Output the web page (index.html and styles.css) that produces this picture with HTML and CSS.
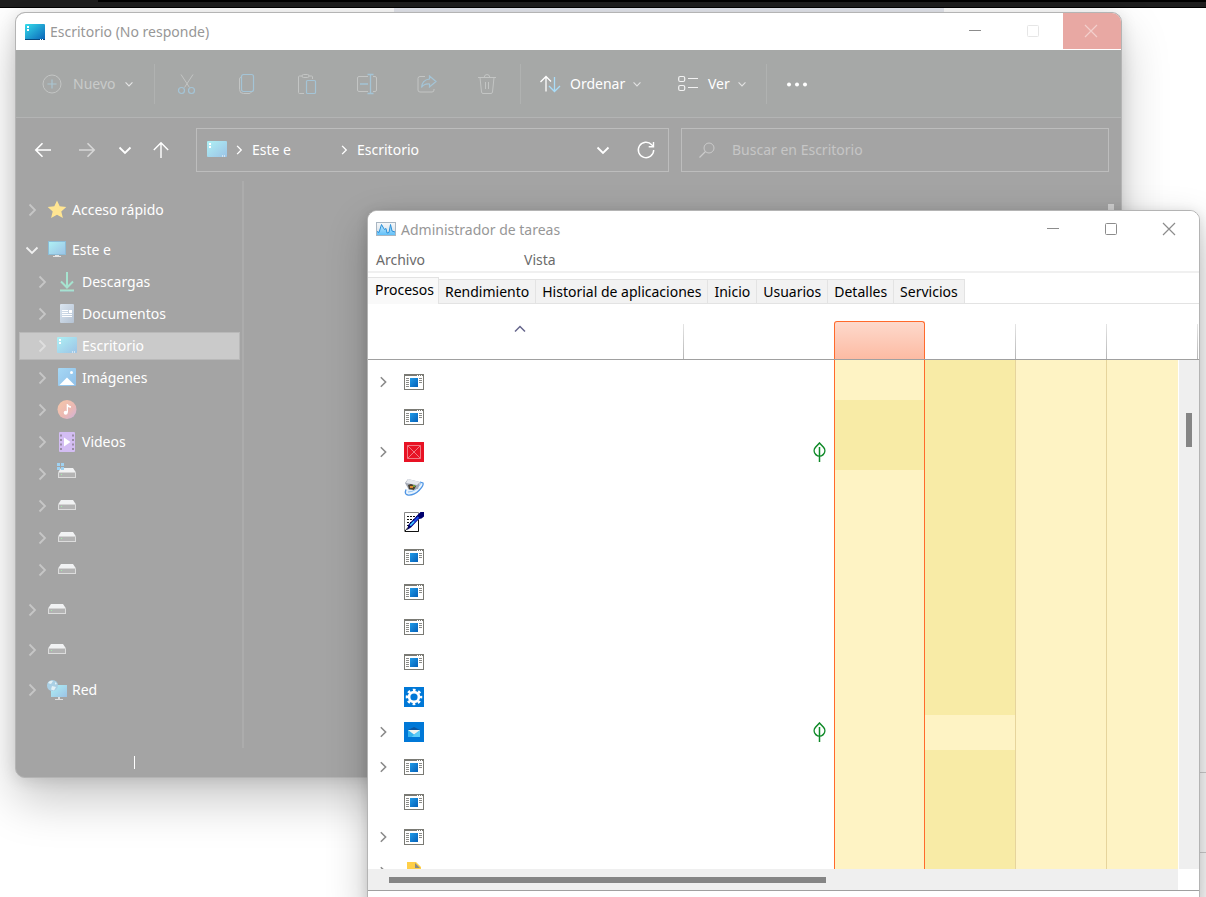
FILE: index.html
```html
<!DOCTYPE html>
<html lang="es">
<head>
<meta charset="utf-8">
<title>Escritorio</title>
<link rel="stylesheet" href="styles.css">
</head>
<body>
<svg class="defs" aria-hidden="true">
  <defs>
    <linearGradient id="g-desk" x1="0" y1="0" x2="1" y2="1"><stop offset="0" stop-color="#35dcea"/><stop offset="1" stop-color="#0a62b8"/></linearGradient>
    <linearGradient id="g-desk-soft" x1="0" y1="0" x2="1" y2="1"><stop offset="0" stop-color="#aef0f4"/><stop offset="1" stop-color="#9cc3e6"/></linearGradient>
    <linearGradient id="g-down" x1="0" y1="0" x2="0" y2="1"><stop offset="0" stop-color="#aee8cb"/><stop offset="1" stop-color="#9fdcd8"/></linearGradient>
    <linearGradient id="g-doc" x1="0" y1="0" x2="1" y2="1"><stop offset="0" stop-color="#dbe6f1"/><stop offset="1" stop-color="#b4c2d3"/></linearGradient>
    <linearGradient id="g-img" x1="0" y1="0" x2="1" y2="1"><stop offset="0" stop-color="#a6d8f5"/><stop offset="1" stop-color="#8fbfe8"/></linearGradient>
    <linearGradient id="g-music" x1="0" y1="0" x2="1" y2="1"><stop offset="0" stop-color="#f6c8a8"/><stop offset=".6" stop-color="#eab8b4"/><stop offset="1" stop-color="#cdb2dc"/></linearGradient>
    <linearGradient id="g-app" x1="0" y1="0" x2="1" y2="1"><stop offset="0" stop-color="#1f9be8"/><stop offset="1" stop-color="#0560b8"/></linearGradient>
    <linearGradient id="g-tm" x1="0" y1="0" x2="0" y2="1"><stop offset="0" stop-color="#f6f8fa"/><stop offset="1" stop-color="#cfdbe4"/></linearGradient>
    <linearGradient id="g-tmf" x1="0" y1="0" x2="0" y2="1"><stop offset="0" stop-color="#c4ebff"/><stop offset="1" stop-color="#62c0f8"/></linearGradient>
  </defs>
  <symbol id="i-right" viewBox="0 0 16 16"><path d="M5.500 2.500 11 8l-5.500 5.500" fill="none" stroke="currentColor" stroke-width="1.800"/></symbol>
  <symbol id="i-down" viewBox="0 0 16 16"><path d="M2.500 5.500 8 11l5.500-5.500" fill="none" stroke="currentColor" stroke-width="1.800"/></symbol>
  <symbol id="i-min" viewBox="0 0 16 16"><path d="M2 7.500h12" stroke="currentColor"/></symbol>
  <symbol id="i-max" viewBox="0 0 16 16"><rect x="2.500" y="2.500" width="11" height="11" rx="1" fill="none" stroke="currentColor"/></symbol>
  <symbol id="i-close" viewBox="0 0 16 16"><path d="m2 2 12 12M14 2 2 14" stroke="currentColor" stroke-width="1.200"/></symbol>
  <symbol id="i-screen" viewBox="0 0 20 20"><rect y="1" width="20" height="16" rx="1" fill="url(#g-desk-soft)"/><path d="M2 3h2v2H2zM2 6h2v2H2zM15 15.500h1v1h-1zM17 15.500h1v1h-1z" fill="#fff"/></symbol>
  <symbol id="i-pc" viewBox="0 0 20 20"><path d="M1 1h18v14H1z" fill="#8cbcd6"/><path d="M2 2h16v12H2z" fill="url(#g-desk-soft)"/><path d="M8 15h4v1h2v1H6v-1h2z" fill="#e4e4e4"/></symbol>
  <symbol id="i-drive" viewBox="0 0 20 20"><path d="M4 4h12l3 4.500H1z" fill="#f1f2f3"/><path d="M1 8.500h18V14H1z" fill="#dcdcdc"/><path d="M2 9h16v4H2z" fill="#b3b3b3"/><path d="M4 10h1v1H4z" fill="#a0efa8"/></symbol>
  <symbol id="i-app" viewBox="0 0 20 20"><rect x=".5" y="2.500" width="19" height="15" fill="#fff" stroke="#7a7a74"/><path d="M0 2h20v2H0z" fill="#7a7a74"/><path d="M13 3.500h1M15 3.500h1M17 3.500h1" stroke="#fff"/><path d="M2 6.500h3M2 8.500h3M2 10.500h3M2 12.500h3M2 14.500h3M15 6.500h3M15 8.500h3M15 10.500h3" stroke="#8c8c88"/><path d="M6 6h8v9H6z" fill="url(#g-app)"/></symbol>
  <symbol id="i-leaf" viewBox="0 0 14 20"><path d="M6.500 1 10.500 5.300a5.300 5.300 0 1 1-8 0z" fill="none" stroke="#0f8a28" stroke-width="1.500"/><path d="M6.500 5v15" stroke="#0f8a28" stroke-width="1.500"/></symbol>
</svg>

<div class="desktop">
  <div class="backdrop"><div class="strip"></div><div class="behind"></div></div>

  <section class="window explorer" aria-label="Escritorio (No responde)">
    <header class="titlebar">
      <svg class="ic20" viewBox="0 0 20 20"><rect y="2" width="20" height="16" rx="1" fill="url(#g-desk)"/><path d="M0 17h20v.5q0 .5-.5.500H.5Q0 18 0 17.500z" fill="#084a80"/><path d="M2 4h2v2H2zM2 7h2v2H2zM15 17h1v1h-1zM17 17h1v1h-1z" fill="#fff"/></svg>
      <h1>Escritorio (No responde)</h1>
      <div class="controls">
        <button aria-label="Minimizar"><svg class="ic16"><use href="#i-min"/></svg></button>
        <button class="faint" aria-label="Maximizar"><svg class="ic16"><use href="#i-max"/></svg></button>
        <button class="danger" aria-label="Cerrar"><svg class="ic16"><use href="#i-close"/></svg></button>
      </div>
    </header>

    <div class="toolbar">
      <button class="tool new"><svg class="ic20" viewBox="0 0 20 20" fill="none"><circle cx="10" cy="10" r="9" stroke="#c3c5c4"/><path d="M10 5.500v9M5.500 10h9" stroke="#aac5d2" stroke-width="1.200"/></svg><span>Nuevo</span><svg class="ic10"><use href="#i-down"/></svg></button>
      <div class="icon-group">
        <button class="tool" aria-label="Cortar"><svg class="ic20" viewBox="0 0 20 20" fill="none"><path d="m4 .5 8.500 13M16 .5l-8.500 13" stroke="#c3c5c4"/><circle cx="4.500" cy="16.500" r="3" stroke="#a4c4d6" stroke-width="1.200"/><circle cx="14.500" cy="16.500" r="3" stroke="#a4c4d6" stroke-width="1.200"/></svg></button>
        <button class="tool" aria-label="Copiar"><svg class="ic20" viewBox="0 0 20 20" fill="none"><path d="M4 3Q2.500 3.500 2.500 5v10.500q0 4 4 4H12q1.500 0 2.500-1.500" stroke="#c3c5c4"/><rect x="4.500" y=".5" width="12" height="17" rx="2" stroke="#a4c4d6" stroke-width="1.200"/></svg></button>
        <button class="tool" aria-label="Pegar"><svg class="ic20" viewBox="0 0 20 20" fill="none"><path d="M5 2H2.500q-1 0-1 1v15.500q0 1 1 1H7M12 2h2.500q1 0 1 1v2" stroke="#c3c5c4"/><rect x="5" y=".5" width="7" height="3" rx="1.500" stroke="#c3c5c4"/><rect x="9.500" y="6.500" width="9" height="13" rx="1" stroke="#a4c4d6" stroke-width="1.200"/></svg></button>
        <button class="tool" aria-label="Cambiar nombre"><svg class="ic20" viewBox="0 0 20 20" fill="none"><path d="M11 2.500H2q-1.500 0-1.500 1.500v12q0 1.500 1.500 1.500h9M16 2.500h2q1.500 0 1.500 1.500v12q0 1.500-1.500 1.500h-2" stroke="#c3c5c4"/><path d="M10.500.5h6M13.500.5v19M10.500 19.500h6M3 10h8" stroke="#a4c4d6" stroke-width="1.300"/></svg></button>
        <button class="tool" aria-label="Compartir"><svg class="ic20" viewBox="0 0 20 20" fill="none"><path d="M8 2.500H3q-2 0-2 2V16q0 2 2 2h12q2 0 2-2v-1" stroke="#c3c5c4"/><path d="M12.500 2 19 7.500 12.500 13V10Q7 9.500 4.500 13.500 5 6 12.500 5z" stroke="#a4c4d6" stroke-width="1.200"/></svg></button>
        <button class="tool" aria-label="Eliminar"><svg class="ic20" viewBox="0 0 20 20" fill="none" stroke="#c3c5c4"><path d="M1 3.500h18M7 3.500Q7.500.5 10 .5t3 3M3 3.500l1.500 14.500q.2 1.500 1.500 1.500h8q1.300 0 1.500-1.500L17 3.500M8.500 8v7M11.500 8v7"/></svg></button>
      </div>
      <button class="tool labelled sort"><svg class="ic20" viewBox="0 0 20 20" fill="none" stroke-width="1.300"><path d="M6 17.500V3M.5 8 6 2.500 11 7.500" stroke="#fff"/><path d="M14.500 3v14.500M9 12l5.500 5.500L20 12" stroke="#a9dcf8"/></svg><span>Ordenar</span><svg class="ic10"><use href="#i-down"/></svg></button>
      <button class="tool labelled view"><svg class="ic20" viewBox="0 0 20 20" fill="none" stroke="#f2f2f2" stroke-width="1.200"><rect x=".7" y="2.500" width="6" height="5" rx="1.500"/><rect x=".7" y="11.500" width="6" height="5" rx="1.500"/><path d="M10 4.500h10M10 13.500h10"/></svg><span>Ver</span><svg class="ic10"><use href="#i-down"/></svg></button>
      <button class="tool" aria-label="Ver más"><svg class="ic20" viewBox="0 0 20 20" fill="#fff"><circle cx="2" cy="10.500" r="2"/><circle cx="10" cy="10.500" r="2"/><circle cx="18" cy="10.500" r="2"/></svg></button>
    </div>

    <div class="navrow">
      <div class="navbuttons">
        <button aria-label="Atrás"><svg class="ic16" viewBox="0 0 16 16"><path d="M16 8H1M7.500 1.300.8 8l6.700 6.700" fill="none" stroke="#fff" stroke-width="1.600"/></svg></button>
        <button aria-label="Adelante"><svg class="ic16" viewBox="0 0 16 16"><path d="M0 8h15M8.500 1.300 15.200 8l-6.700 6.700" fill="none" stroke="#d6d6d6" stroke-width="1.600"/></svg></button>
        <button class="narrow" aria-label="Ubicaciones recientes"><svg class="ic16"><use href="#i-down"/></svg></button>
        <button class="up" aria-label="Subir"><svg class="ic16" viewBox="0 0 16 16"><path d="M8 16V1M.8 8 8 .8 15.200 8" fill="none" stroke="#fff" stroke-width="1.400"/></svg></button>
      </div>
      <div class="address">
        <svg class="ic20"><use href="#i-screen"/></svg>
        <svg class="ic12"><use href="#i-right"/></svg>
        <a class="crumb first" href="#equipo">Este e</a>
        <svg class="ic12"><use href="#i-right"/></svg>
        <a class="crumb" href="#escritorio">Escritorio</a>
        <span class="grow"></span>
        <button aria-label="Ubicaciones anteriores"><svg class="ic16"><use href="#i-down"/></svg></button>
        <button aria-label="Actualizar"><svg class="ic18" viewBox="0 0 18 18"><path d="M16.700 9a7.700 7.700 0 1 1-2-5.200L16.500 5.500" fill="none" stroke="#fff" stroke-width="1.400"/><path d="M16.500 1v4.800h-4.800" fill="none" stroke="#fff" stroke-width="1.400"/></svg></button>
      </div>
      <label class="search">
        <svg class="ic16" viewBox="0 0 16 16"><circle cx="10" cy="6" r="5" fill="none" stroke="#cbcbcb"/><path d="M6.500 9.500.5 15.500" stroke="#cbcbcb" stroke-width="1.200"/></svg>
        <input type="search" placeholder="Buscar en Escritorio" aria-label="Buscar en Escritorio">
      </label>
    </div>

    <div class="content">
      <nav class="tree" aria-label="Panel de navegación">
        <a class="node top" href="#rapido"><svg class="ic16 chev"><use href="#i-right"/></svg><svg class="ic20" viewBox="0 0 20 20"><path d="m10 .5 2.700 5.800 6.600.6-5 4.500 1.600 6.700L10 14.800l-5.900 3.300 1.600-6.700-5-4.500 6.600-.6z" fill="#ffe592"/></svg><span>Acceso rápido</span></a>
        <a class="node top open" href="#equipo"><svg class="ic16 chev"><use href="#i-down"/></svg><svg class="ic20"><use href="#i-pc"/></svg><span>Este e</span></a>
        <a class="node" href="#descargas"><svg class="ic16 chev"><use href="#i-right"/></svg><svg class="ic20" viewBox="0 0 20 20"><path d="M10 0v15M4 9.500l6 6 6-6" fill="none" stroke="#a6e3cf" stroke-width="2"/><path d="M3 17.500h14v2H3z" fill="url(#g-down)"/></svg><span>Descargas</span></a>
        <a class="node" href="#documentos"><svg class="ic16 chev"><use href="#i-right"/></svg><svg class="ic20" viewBox="0 0 20 20"><rect x="3" width="14" height="19" rx="1" fill="url(#g-doc)"/><path d="M5 6.500h6M5 8.500h6M5 10.500h10M5 12.500h10" stroke="#fff"/><path d="M12 6h3v3h-3z" fill="#fff"/></svg><span>Documentos</span></a>
        <a class="node current" href="#escritorio" aria-current="page"><svg class="ic16 chev"><use href="#i-right"/></svg><svg class="ic20"><use href="#i-screen"/></svg><span>Escritorio</span></a>
        <a class="node" href="#imagenes"><svg class="ic16 chev"><use href="#i-right"/></svg><svg class="ic20" viewBox="0 0 20 20"><rect x="1" width="18" height="18" rx="1" fill="url(#g-img)"/><circle cx="14.500" cy="4.500" r="1.500" fill="#fff"/><path d="M2.500 17 10 9.500l7.500 7.500z" fill="#fff"/></svg><span>Imágenes</span></a>
        <a class="node" href="#musica" aria-label="Música"><svg class="ic16 chev"><use href="#i-right"/></svg><svg class="ic20" viewBox="0 0 20 20"><circle cx="10" cy="9.500" r="9.500" fill="url(#g-music)"/><circle cx="8.700" cy="12.700" r="2" fill="#fff"/><path d="M9.700 12.500V4h1q.8 2 3.300 2.200v1.500q-2 0-3-.8v5.600z" fill="#fff"/></svg></a>
        <a class="node" href="#videos"><svg class="ic16 chev"><use href="#i-right"/></svg><svg class="ic20" viewBox="0 0 20 20"><rect x="2" width="16" height="20" rx="1" fill="#d3bdf3"/><path d="M4 2.500v16M16 2.500v16" stroke="#9a8ca8" stroke-width="2" stroke-dasharray="2 2.500"/><path d="M7 5.500 13.500 10 7 14.500z" fill="#fff"/></svg><span>Videos</span></a>
        <a class="node" href="#c" aria-label="Disco del sistema"><svg class="ic16 chev"><use href="#i-right"/></svg><svg class="ic20" viewBox="0 0 20 20"><use href="#i-drive" width="20" height="20"/><path d="M0-1h3v3H0zM4-1h3v3H4zM0 3h3v3H0zM4 3h3v3H4z" fill="#9fd2f2"/></svg></a>
        <a class="node" href="#d" aria-label="Disco"><svg class="ic16 chev"><use href="#i-right"/></svg><svg class="ic20"><use href="#i-drive"/></svg></a>
        <a class="node" href="#e" aria-label="Disco"><svg class="ic16 chev"><use href="#i-right"/></svg><svg class="ic20"><use href="#i-drive"/></svg></a>
        <a class="node" href="#f" aria-label="Disco"><svg class="ic16 chev"><use href="#i-right"/></svg><svg class="ic20"><use href="#i-drive"/></svg></a>
        <a class="node top" href="#g" aria-label="Disco"><svg class="ic16 chev"><use href="#i-right"/></svg><svg class="ic20"><use href="#i-drive"/></svg></a>
        <a class="node top" href="#h" aria-label="Disco"><svg class="ic16 chev"><use href="#i-right"/></svg><svg class="ic20"><use href="#i-drive"/></svg></a>
        <a class="node top" href="#red"><svg class="ic16 chev"><use href="#i-right"/></svg><svg class="ic20" viewBox="0 0 20 20"><path d="M4 5h16v12H4z" fill="url(#g-desk-soft)"/><path d="M11 17h2v2h3v1H8v-1h3z" fill="#dedede"/><circle cx="5.500" cy="5.500" r="5.500" fill="#a9cfe4"/><path d="M1 3q2-3 5-2L4 4zM5 6l4 1-2 3.500-3-1zM8 2l2 2-2 .5z" fill="#e3f1f6"/></svg><span>Red</span></a>
      </nav>
      <main class="files"><div class="thumb"></div></main>
    </div>
    <footer class="status"><span class="caret"></span></footer>
  </section>

  <section class="window manager" aria-label="Administrador de tareas">
    <header class="titlebar">
      <svg class="ic20" viewBox="0 0 20 20"><rect x=".5" y="2.500" width="19" height="13" fill="url(#g-tm)" stroke="#a9b6c2"/><path d="M1 11.500 3 12 5.500 4.500 7.500 8l1 1.500 1.500-1L11 13l2-.5 1.500-8 1.500 6.500 3 1V15H1z" fill="url(#g-tmf)"/><path d="M1 11.500 3 12.500 5.500 4.500 7.500 8l1 1.500 1.500-1L11 13l2-.5 1.500-8 1.500 6.500 3 1" fill="none" stroke="#2a8fd8"/></svg>
      <h2>Administrador de tareas</h2>
      <div class="controls">
        <button aria-label="Minimizar"><svg class="ic16"><use href="#i-min"/></svg></button>
        <button aria-label="Maximizar"><svg class="ic16"><use href="#i-max"/></svg></button>
        <button aria-label="Cerrar"><svg class="ic16"><use href="#i-close"/></svg></button>
      </div>
    </header>
    <div class="menubar"><button>Archivo</button><button>Vista</button></div>
    <div class="tabs" role="tablist">
      <button role="tab" aria-selected="true">Procesos</button>
      <button role="tab">Rendimiento</button>
      <button role="tab">Historial de aplicaciones</button>
      <button role="tab">Inicio</button>
      <button role="tab">Usuarios</button>
      <button role="tab">Detalles</button>
      <button role="tab">Servicios</button>
    </div>
    <div class="pane">
      <table class="processes">
        <colgroup><col><col class="c-status"><col class="c-num"><col class="c-num"><col class="c-num"><col class="c-last"></colgroup>
        <thead>
          <tr>
            <th><div class="head name"><button class="sorter" aria-label="Ordenar por nombre"><svg class="ic10" viewBox="0 0 10 10"><path d="M0 7.500 5 2.500l5 5" fill="none" stroke="#66668c" stroke-width="1.500"/></svg></button></div></th>
            <th><div class="head plain"></div></th>
            <th><div class="head hot"></div></th>
            <th><div class="head"></div></th>
            <th><div class="head"></div></th>
            <th><div class="head last"></div></th>
          </tr>
        </thead>
        <tbody>
          <tr class="cut"><td></td><td></td><td></td><td></td><td></td><td></td></tr>
          <tr><td><div class="proc"><svg class="chev"><use href="#i-right"/></svg><svg class="ic20"><use href="#i-app"/></svg></div></td><td></td><td></td><td></td><td></td><td></td></tr>
          <tr><td><div class="proc"><svg class="ic20"><use href="#i-app"/></svg></div></td><td></td><td class="warm"></td><td></td><td></td><td></td></tr>
          <tr><td><div class="proc"><svg class="chev"><use href="#i-right"/></svg><svg class="ic20" viewBox="0 0 20 20"><path d="M0 0h20v20H0z" fill="#e81224"/><path d="M3.500 3.500h13v13h-13zM3.500 3.500l13 13M16.500 3.500l-13 13" fill="none" stroke="#f07a84"/></svg></div></td><td><svg class="leaf"><use href="#i-leaf"/></svg></td><td class="warm"></td><td></td><td></td><td></td></tr>
          <tr><td><div class="proc"><svg class="ic20" viewBox="0 0 20 20"><path d="M2 12.500q-2 5 2 5.500 6 .5 11-4.500t4-7.500l-3-1" fill="#e8f3fd" stroke="#4f95e4" stroke-width="1.300"/><path d="M4 15q8 0 13-9" fill="none" stroke="#8cc0f4"/><path d="M1 6 4 2l12 3-2 7-9 1z" fill="#a2a8b4"/><path d="m2 6 2-4 12 3-3 3z" fill="#e6e9ee"/><path d="m4 8 3-1 5 2-2 4-5-1z" fill="#4a4030"/><path d="M6 9h3v2H6z" fill="#e08a30"/><path d="M9 8h2v2H9z" fill="#6ea040"/></svg></div></td><td></td><td></td><td></td><td></td><td></td></tr>
          <tr><td><div class="proc"><svg class="ic20" viewBox="0 0 20 20"><path d="M.5.5h14v19H.5z" fill="#fff" stroke="#888"/><path d="M14.500 8v11.500H1" fill="none" stroke="#111"/><path d="M3 4.500h10M3 7.500h8M3 10.500h4M3 13.500h2" stroke="#111" stroke-dasharray="2 1"/><path d="m3 18 1.500-5.500L14 2.500 16.500 0H20v4.500l-2.500 2L15 7l-8 8.500z" fill="#00006e"/><path d="m6.500 13.500 8-8.500" stroke="#1c48e8" stroke-width="2"/><path d="m6 13.500 4-4" stroke="#45dcff" stroke-width="1.300"/><path d="m1 19 3-3.500" stroke="#111"/></svg></div></td><td></td><td></td><td></td><td></td><td></td></tr>
          <tr><td><div class="proc"><svg class="ic20"><use href="#i-app"/></svg></div></td><td></td><td></td><td></td><td></td><td></td></tr>
          <tr><td><div class="proc"><svg class="ic20"><use href="#i-app"/></svg></div></td><td></td><td></td><td></td><td></td><td></td></tr>
          <tr><td><div class="proc"><svg class="ic20"><use href="#i-app"/></svg></div></td><td></td><td></td><td></td><td></td><td></td></tr>
          <tr><td><div class="proc"><svg class="ic20"><use href="#i-app"/></svg></div></td><td></td><td></td><td></td><td></td><td></td></tr>
          <tr><td><div class="proc"><svg class="ic20" viewBox="0 0 20 20"><path d="M0 0h20v20H0z" fill="#0078d7"/><circle cx="10" cy="10" r="7" fill="none" stroke="#fff" stroke-width="2.500" stroke-dasharray="2.750 2.750" stroke-dashoffset="1.400"/><circle cx="10" cy="10" r="4.900" fill="none" stroke="#fff" stroke-width="2.600"/></svg></div></td><td></td><td></td><td></td><td></td><td></td></tr>
          <tr><td><div class="proc"><svg class="chev"><use href="#i-right"/></svg><svg class="ic20" viewBox="0 0 20 20"><path d="M0 0h20v20H0z" fill="#0078d7"/><path d="m4 8 6-3 6 3z" fill="#0a55a0"/><path d="M4 8h12v7H4z" fill="#35b3ee"/><path d="m16 8-8.500 7H16z" fill="#5accf8"/><path d="M4 8h12l-6 4.500z" fill="#f0f4f0"/></svg></div></td><td><svg class="leaf"><use href="#i-leaf"/></svg></td><td></td><td class="cool"></td><td></td><td></td></tr>
          <tr><td><div class="proc"><svg class="chev"><use href="#i-right"/></svg><svg class="ic20"><use href="#i-app"/></svg></div></td><td></td><td></td><td></td><td></td><td></td></tr>
          <tr><td><div class="proc"><svg class="ic20"><use href="#i-app"/></svg></div></td><td></td><td></td><td></td><td></td><td></td></tr>
          <tr><td><div class="proc"><svg class="chev"><use href="#i-right"/></svg><svg class="ic20"><use href="#i-app"/></svg></div></td><td></td><td></td><td></td><td></td><td></td></tr>
          <tr><td><div class="proc"><svg class="chev"><use href="#i-right"/></svg><svg class="ic20" viewBox="0 0 20 20"><path d="M3 0h9l5 5v15H3z" fill="#ffcf48"/><path d="M11 1v5h5z" fill="#8a8a84"/></svg></div></td><td></td><td></td><td></td><td></td><td></td></tr>
        </tbody>
      </table>
      <div class="vscroll"><div class="vthumb"></div></div>
    </div>
    <div class="hscroll"><div class="htrack"><div class="hthumb"></div></div></div>
    <footer class="foot"></footer>
  </section>
</div>
</body>
</html>
```
FILE: styles.css
```css
* { box-sizing: border-box; }
body { margin: 0; font: 14px/20px "Noto Sans", "Open Sans", sans-serif; }
button { font: inherit; color: inherit; background: none; border: 0; padding: 0; margin: 0; display: flex; align-items: center; justify-content: center; }
a { color: inherit; text-decoration: none; }
h1, h2 { margin: 0; font-size: 14px; font-weight: 400; color: #979797; }
svg { display: block; flex: none; overflow: visible; }
.defs { position: absolute; width: 0; height: 0; }
.ic10 { width: 10px; height: 10px; }
.ic12 { width: 12px; height: 12px; }
.ic16 { width: 16px; height: 16px; }
.ic18 { width: 18px; height: 18px; }
.ic20 { width: 20px; height: 20px; }

.desktop { position: relative; height: 100vh; overflow: hidden; background: linear-gradient(#d0d0d0, #d0d0d0) right 772px / 8px 1px no-repeat, linear-gradient(#d0d0d0, #d0d0d0) right 852px / 8px 1px no-repeat, #fff; }
.strip { height: 8px; background: linear-gradient(#1e1e1e, #1e1e1e) 0 0 / 98px 7px no-repeat, linear-gradient(#000 0 2px, #1e1e1e 2px 7px, #000 7px); }
.behind { height: 60px; background: linear-gradient(90deg, #fff 0 394px, #e6e9f0 394px 944px, #fff 944px); }

.window { position: absolute; display: flex; flex-direction: column; overflow: hidden; border: 1px solid #b4b4b4; border-radius: 10px; }
.explorer { inset: 12px 84px 119px 15px; background: #a4a4a4; color: #fff; box-shadow: 0 22px 48px rgba(0, 0, 0, .22), 0 2px 16px rgba(0, 0, 0, .12); }
.manager { inset: 210px 6px -12px 367px; background: #fff; box-shadow: 0 16px 40px rgba(0, 0, 0, .24), 0 2px 12px rgba(0, 0, 0, .12); padding-bottom: 11px; }

.titlebar { flex: none; display: flex; align-items: center; height: 37px; padding-left: 9px; gap: 5px; background: #fff; }
.controls { display: flex; align-self: stretch; margin-left: auto; color: #8c8c8c; }
.controls button { width: 58px; height: 36px; padding-right: 2px; }
.controls .faint { color: #e6e6e6; }
.controls .danger { background: #e8a8a3; color: #f3cfcc; }

.toolbar { flex: none; display: flex; align-items: center; height: 68px; background: #a6a8a7; border-bottom: 1px solid #b3b4b4; }
.tool { width: 60px; height: 40px; }
.tool.new { width: 138px; justify-content: flex-start; padding-left: 26px; gap: 11px; color: #c9cbca; }
.tool.new .ic10 { color: #e6e6e6; margin-left: -3px; }
.icon-group { display: flex; padding: 0 3px 0 2px; border: solid #b0b2b1; border-width: 0 1px; }
.labelled { justify-content: flex-start; padding-left: 19px; gap: 10px; }
.labelled .ic10 { margin-left: -3px; color: #e2e2e2; }
.sort { width: 138px; }
.view { width: 108px; border-right: 1px solid #b0b2b1; }

.navrow { flex: none; display: grid; grid-template-columns: 163px minmax(0, 473fr) minmax(0, 428fr); align-items: center; gap: 12px; height: 63px; padding: 0 12px 0 5px; }
.navbuttons { display: flex; }
.navbuttons button { width: 44px; height: 44px; }
.navbuttons .narrow { width: 32px; }
.navbuttons .up { width: 40px; }
.address, .search { display: flex; align-items: center; height: 44px; border: 1px solid #bdbdbd; }
.address { padding: 0 4px 0 10px; gap: 6px; }
.crumb { padding-left: 1px; }
.crumb.first { width: 81px; }
.grow { flex: 1; }
.address button { width: 37px; height: 40px; }
.search { padding: 0 17px; gap: 17px; }
.search input { flex: 1; min-width: 0; font: inherit; color: #fff; background: none; border: 0; padding: 0; outline: 0; }
.search input::placeholder { color: #c6c6c6; opacity: 1; }

.content { flex: 1; display: flex; min-height: 0; }
.tree { flex: none; width: 228px; padding: 3px 2px 0 3px; border-right: 2px solid #acacac; overflow: hidden; }
.node { display: flex; align-items: center; height: 28px; margin: 4px 0; padding-left: 14px; border: 1px solid transparent; }
.node.top { margin-top: 12px; padding-left: 4px; }
.node .chev { color: #c6c6c6; margin-right: 7px; }
.node.open .chev { color: #f0f0f0; }
.node span { margin-left: 5px; }
.node.current { background: #cacaca; border-color: #b9b9b9; }
.node.current .chev { color: #dedede; }
.files { flex: 1; display: flex; justify-content: flex-end; padding: 23px 7px 0 0; }
.thumb { width: 6px; background: #cfcfcf; }
.status { flex: none; display: flex; align-items: center; height: 29px; padding-left: 118px; }
.caret { width: 1px; height: 13px; background: #fff; }

.manager .titlebar { padding-left: 8px; }
.menubar { flex: none; display: flex; gap: 99px; height: 25px; padding: 1px 0 0 8px; border-bottom: 2px solid #f0f0f0; color: #6b6b6b; }
.tabs { flex: none; display: flex; align-items: flex-end; height: 31px; border-bottom: 1px solid #e3e3e3; color: #000; }
.tabs button { height: 24px; padding: 0 6px; background: #f2f2f2; border: solid #e3e3e3; border-width: 1px 1px 0 0; }
.tabs button[aria-selected="true"] { height: 27px; margin-bottom: -1px; padding: 0 4px 2px 7px; background: #f9f9f9; }

.pane { flex: 1; min-height: 0; position: relative; overflow: hidden; }
.processes { width: 100%; table-layout: fixed; border-spacing: 0; }
.c-status { width: 150px; }
.c-num { width: 91px; }
.c-last { width: 92px; }
th { height: 56px; padding: 0; vertical-align: bottom; border-bottom: 1px solid #a0a0a0; }
.head { height: 35px; border-right: 1px solid; border-image: linear-gradient(#e6e6e6, #b4b4b4) 1; }
.head.name { padding-right: 11px; }
.head.plain { border: 0; }
.head.last { margin-right: 1px; }
.head.hot { height: 38px; border: 1px solid #ff6a2c; border-bottom: 0; border-image: none; border-radius: 3px 3px 0 0; background: linear-gradient(#fdd9cc, #fdbba3); }
.sorter { width: 20px; height: 10px; margin: 0 auto; }
td { height: 35px; padding: 0 0 1px; }
.cut td { height: 5px; }
td:nth-child(n+3) { background: #fef3c4; }
td:nth-child(3) { border-left: 1px solid #ff6a2c; border-right: 1px solid #ff6a2c; }
td:nth-child(4), td:nth-child(3).warm { background: #f8eba6; }
td:nth-child(4).cool { background: #fef3c4; }
td:nth-child(4), td:nth-child(5), td:nth-child(6) { border-right: 1px solid #e6d49c; }
.proc { display: flex; align-items: center; justify-content: flex-end; width: 56px; gap: 14px; }
.proc .chev { width: 14px; height: 14px; color: #8a8a8a; }
.leaf { width: 14px; height: 20px; margin-left: auto; margin-right: 7px; }
.vscroll { position: absolute; inset: 56px 0 0 auto; width: 21px; padding-top: 53px; background: #efefef; border-left: 1px solid #fff; }
.vthumb { width: 6px; height: 34px; margin-left: 7px; background: #858585; }
.hscroll { flex: none; height: 22px; padding-right: 21px; border-bottom: 1px solid #a0a0a0; }
.htrack { height: 21px; padding: 8px 8px 0 21px; background: #efefef; }
.hthumb { width: 56%; height: 6px; background: #858585; }
.foot { flex: none; height: 6px; }
```
